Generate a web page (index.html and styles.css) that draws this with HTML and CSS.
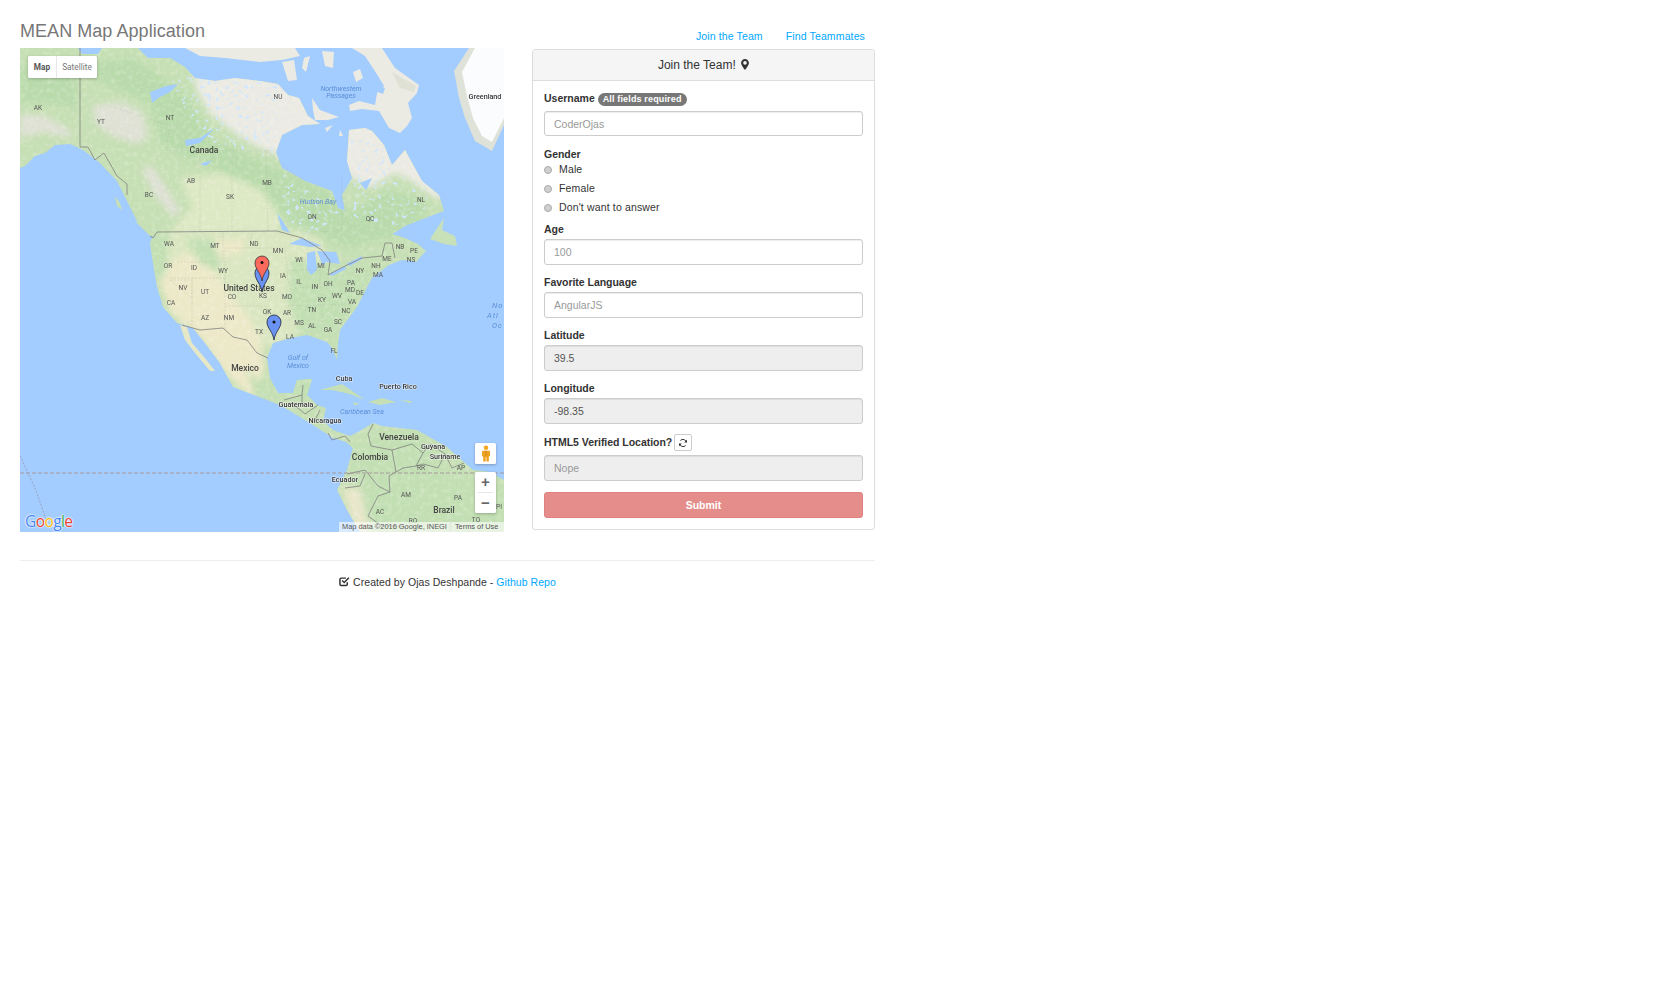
FILE: index.html
```html
<!DOCTYPE html>
<html>
<head>
  <meta charset="UTF-8">
  <title>MEAN Map Application</title>
  <link rel="stylesheet" href="styles.css">
</head>
<body>
  <div class="page">
    <div class="header">
      <h3 class="title">MEAN Map Application</h3>
      <div class="nav">
        <a href="#">Join the Team</a>
        <a href="#">Find Teammates</a>
      </div>
    </div>

    <div class="content">
      <div class="map">
        <svg class="map-svg" viewBox="0 0 484 484" width="484" height="484">
          <defs>
            <path id="landshape" d="M0,0 L58,0 L62,6 L78,6 L82,0 L118,0 L128,10 L150,10 L165,19 L175,30 L195,33 L215,30 L240,33 L258,36 L268,47 L279,50 L288,68 L300,76 L282,77 L262,87 L256,104 L262,120 L285,133 L312,143 L318,160 L325,163 L322,147 L332,130 L327,113 L329,82 L345,80 L352,83 L364,97 L372,117 L385,102 L402,133 L419,147 L424,163 L400,172 L385,178 L372,186 L385,190 L398,196 L406,203 L392,213 L382,212 L369,217 L352,230 L347,239 L337,259 L320,282 L318,295 L317,312 L312,300 L307,294 L287,287 L270,290 L253,295 L247,310 L250,330 L258,345 L273,345 L277,332 L292,331 L287,347 L297,357 L306,360 L303,373 L313,382 L330,388 L338,384 L353,375 L362,378 L397,382 L427,399 L453,422 L470,424 L484,432 L484,484 L340,484 L327,462 L317,442 L327,422 L333,400 L326,394 L313,390 L290,375 L260,357 L213,339 L200,315 L188,299 L173,280 L157,275 L143,259 L137,239 L133,215 L130,195 L133,188 L117,173 L107,153 L97,133 L80,115 L63,102 L50,96 L35,97 L25,105 L15,108 L5,118 L0,120 Z"/>
            <clipPath id="landclip">
              <use href="#landshape"/>
            </clipPath>
            <clipPath id="shieldclip">
              <path d="M150,28 L262,36 L256,110 L232,105 L190,95 L165,60 Z"/>
              <path d="M330,85 L362,100 L372,125 L400,135 L415,160 L370,180 L330,170 L335,130 Z"/>
              <path d="M262,125 L320,165 L290,190 L262,170 Z"/>
            </clipPath>
            <filter id="soft" x="-10%" y="-10%" width="120%" height="120%">
              <feGaussianBlur stdDeviation="3"/>
            </filter>
            <filter id="mottle" x="0" y="0" width="100%" height="100%">
              <feTurbulence type="fractalNoise" baseFrequency="0.22" numOctaves="3" seed="7"/>
              <feColorMatrix type="matrix" values="0 0 0 0 1  0 0 0 0 1  0 0 0 0 .94  0 0 0 2.2 -1"/>
            </filter>
            <filter id="lakes" x="0" y="0" width="100%" height="100%">
              <feTurbulence type="fractalNoise" baseFrequency="0.24" numOctaves="2" seed="21"/>
              <feColorMatrix type="matrix" values="0 0 0 0 .64  0 0 0 0 .8  0 0 0 0 1  0 0 0 9 -5.6"/>
            </filter>
          </defs>

          <rect class="ocean" width="484" height="484"/>

          <g clip-path="url(#landclip)">
            <rect class="land-base" width="484" height="484"/>
            <g filter="url(#soft)">
              <path class="tundra" d="M165,-5 L490,-5 L490,150 L415,150 L395,135 L375,125 L350,140 L325,125 L300,125 L265,110 L240,100 L215,85 L190,65 L178,45 Z"/>
              <path class="rock" d="M72,58 L100,54 L122,64 L128,88 L118,96 L92,88 L76,76 Z"/>
              <path class="rock" d="M0,66 L25,68 L52,84 L50,90 L25,84 L0,90 Z"/>
              <path class="rock" d="M122,120 L132,118 L160,162 L154,170 L134,146 Z"/>
              <path class="prairie" d="M160,130 L205,125 L245,145 L262,172 L258,183 L150,183 L172,160 Z"/>
              <path class="plains" d="M135,184 L300,184 L310,225 L275,290 L250,300 L220,290 L160,280 Z"/>
              <path class="desert" d="M137,225 L165,205 L190,215 L205,240 L225,265 L240,290 L245,320 L232,350 L205,325 L172,280 L150,265 Z"/>
              <path class="desert" d="M195,192 L225,192 L222,205 L198,208 Z"/>
              <path class="forest" d="M165,190 L195,192 L200,225 L180,215 Z"/>
              <path class="forest" d="M270,210 L355,225 L335,262 L315,285 L280,285 L268,255 Z"/>
              <path class="forest" d="M132,185 L150,185 L146,225 L137,235 Z"/>
              <path class="forest" d="M250,330 L295,330 L300,360 L270,350 Z"/>
              <path class="forest" d="M225,320 L250,345 L280,358 L260,350 L235,345 Z"/>
              <path class="forest" d="M330,395 L484,440 L484,484 L345,484 L335,440 Z"/>
              <path class="forest" d="M350,385 L400,385 L430,405 L400,425 L350,425 Z"/>
              <path class="tan" d="M322,440 L340,440 L350,484 L335,484 Z"/>
              <path class="boreal" d="M170,80 L235,110 L262,122 L312,145 L330,165 L365,142 L400,150 L410,165 L370,190 L330,200 L300,190 L262,170 L240,140 L190,120 Z"/>
              <path class="boreal" d="M62,20 L110,8 L165,45 L190,85 L175,115 L140,95 L130,55 L95,42 Z"/>
              <path class="boreal" d="M0,20 L55,20 L58,60 L25,55 L0,55 Z"/>
            </g>
            <rect class="mottle" width="484" height="484" filter="url(#mottle)"/>
            <g clip-path="url(#shieldclip)">
              <rect width="484" height="484" filter="url(#lakes)"/>
            </g>
          </g>

          <path class="land-base" d="M115,173 L125,176 L137,188 L130,188 Z"/>
          <path class="land-base" d="M95,148 L100,155 L102,162 L97,158 Z"/>
          <path class="desert-solid" d="M160,277 L167,279 172,295 L185,310 L195,323 L190,323 L175,305 L165,292 Z"/>

          <!-- arctic bits and lakes -->
          <path class="tundra" d="M165,0 L262,0 L275,0 L280,8 L262,12 L240,14 L205,10 L180,8 Z"/>
          <path class="tundra" d="M262,14 L274,12 L277,32 L268,33 Z"/>
          <path class="tundra" d="M284,10 L290,8 L286,24 L282,20 Z"/>
          <path class="tundra" d="M302,3 L314,4 L313,20 L305,18 Z"/>
          <path class="tundra" d="M292,50 L300,62 L319,69 L308,72 L295,72 L293,62 Z"/>
          <path class="tundra" d="M333,24 L340,21 L343,30 L336,34 Z"/>
          <path class="tundra" d="M332,0 L362,0 L375,20 L399,37 L397,45 L388,55 L392,70 L387,78 L380,85 L369,80 L359,63 L342,61 L330,63 L329,57 L339,53 L355,57 L357,45 L364,38 L358,28 L345,8 Z"/>
          <path class="rock" d="M372,24 L396,38 L394,44 L380,40 Z"/>
          <path class="water" d="M358,37 L365,40 L363,46 L358,44 Z"/>
          <path class="tundra" d="M305,80 L313,77 L307,84 Z"/>
          <path class="tundra" d="M320,82 L323,88 L319,88 Z"/>
          <path class="water" d="M130,44 L146,38 L158,36 L150,44 L138,50 L132,55 Z"/>
          <path class="water" d="M165,92 L180,90 L195,80 L180,95 L166,98 Z"/>
          <path class="water" d="M180,116 L192,112 L186,118 Z"/>
          <path class="water" d="M257,165 L262,172 L270,185 L262,182 Z"/>
          <path class="water" d="M269,196 L282,190 L302,198 L290,199 L278,197 Z"/>
          <path class="water" d="M287,205 L295,203 L297,222 L291,227 L287,222 Z"/>
          <path class="water" d="M297,203 L316,204 L320,216 L306,214 L303,218 Z"/>
          <path class="water" d="M309,226 L325,218 L326,221 L312,228 Z"/>
          <path class="water" d="M326,216 L342,208 L342,211 L330,218 Z"/>
          <path class="water" d="M298,60 L305,56 L304,62 Z"/>
          <path class="water" d="M340,135 L352,130 L346,142 Z"/>

          <!-- greenland -->
          <path class="ice-edge" d="M449,0 L434,23 L439,50 L445,70 L455,93 L472,103 L484,77 L484,0 Z"/>
          <path class="ice" d="M455,0 L442,24 L447,48 L453,70 L462,88 L472,94 L484,70 L484,0 Z"/>

          <!-- islands -->
          <path class="forest-solid" d="M410,191 L424,170 L422,182 L435,188 L437,198 L424,196 Z"/>
          <path class="forest-solid" d="M388,212 L402,202 L406,203 L396,214 Z"/>
          <path class="land-base" d="M300,342 L322,336 L335,345 L345,352 L330,346 L312,342 Z"/>
          <path class="land-base" d="M348,354 L362,350 L376,354 L360,357 Z"/>
          <path class="land-base" d="M380,352 L392,353 L390,355 Z"/>
          <path class="land-base" d="M333,354 L340,356 L334,357 Z"/>

          <!-- borders -->
          <g class="state-lines">
            <path d="M180,183 L180,102 M212,183 L212,102 M248,183 L246,102 L280,132"/>
            <path d="M146,102 L250,103 M90,58 L150,78 L146,102"/>
            <path d="M288,185 L322,182 L322,130"/>
            <path d="M157,214 L203,214 L203,184 M147,230 L205,230 L205,200 L230,200 L232,184"/>
            <path d="M232,200 L265,200 L268,232 L275,258 M205,230 L205,258 L246,258 L246,272 L270,272"/>
            <path d="M172,230 L172,278 M205,258 L205,282 M150,232 L172,232 L172,250 L150,232"/>
            <path d="M265,258 L330,256 M285,258 L290,285 M302,258 L302,284 M275,240 L335,236 M300,214 L300,240"/>
            <path d="M268,222 L300,222 M332,225 L352,222"/>
          </g>
          <g class="country-lines">
            <path d="M60,0 L60,99 L68,99 L75,112 L84,105 L97,128 L107,136 L107,147"/>
            <path d="M130,188 L133,190 L137,184 L257,183 L282,190 L302,202 L310,213 L308,227 L325,218 L342,210 L362,208 L365,195 L372,195 L375,210"/>
            <path d="M162,277 L180,282 L203,280 L213,289 L227,292 L237,305 L248,310"/>
            <path d="M264,352 L282,347 L283,337 M282,347 L282,358 M272,355 L285,366 L298,357 M295,372 L300,362"/>
            <path d="M308,385 L312,392 L325,388 L330,394"/>
            <path d="M353,376 L348,386 L351,398 L372,402 L376,424 L369,428 L370,444 L358,448 L348,468 L362,478 L384,478 L386,484"/>
            <path d="M372,402 L392,396 L403,405 L396,418 L383,420 L376,424"/>
            <path d="M403,405 L410,396 L425,406 L418,420 L403,416 L396,418"/>
            <path d="M425,406 L432,420 L444,415"/>
            <path d="M327,426 L345,422 L358,438 L370,444 M325,440 L340,438 L345,426"/>
          </g>
          <path class="equator" d="M0,425 L484,425"/>
          <path class="dateline" d="M0,408 L15,440 L25,468 L26,478"/>

          <!-- labels -->
          <g class="lbl">
            <text x="18" y="62">AK</text><text x="81" y="76">YT</text><text x="150" y="72">NT</text>
            <text x="258" y="51">NU</text><text x="171" y="135">AB</text><text x="129" y="149">BC</text>
            <text x="210" y="151">SK</text><text x="247" y="137">MB</text><text x="292" y="171">ON</text>
            <text x="350" y="173">QC</text><text x="401" y="154">NL</text><text x="149" y="198">WA</text>
            <text x="195" y="200">MT</text><text x="234" y="198">ND</text><text x="258" y="205">MN</text>
            <text x="148" y="220">OR</text><text x="174" y="222">ID</text><text x="203" y="225">WY</text>
            <text x="279" y="214">WI</text><text x="301" y="220">MI</text><text x="340" y="225">NY</text>
            <text x="356" y="220">NH</text><text x="367" y="213">ME</text><text x="358" y="229">MA</text>
            <text x="380" y="201">NB</text><text x="394" y="205">PE</text><text x="391" y="214">NS</text>
            <text x="263" y="230">IA</text><text x="279" y="236">IL</text><text x="295" y="241">IN</text>
            <text x="308" y="238">OH</text><text x="331" y="237">PA</text><text x="330" y="244">MD</text>
            <text x="340" y="247">DE</text><text x="163" y="242">NV</text><text x="185" y="246">UT</text>
            <text x="212" y="251">CO</text><text x="243" y="250">KS</text><text x="267" y="251">MO</text>
            <text x="302" y="254">KY</text><text x="317" y="250">WV</text><text x="332" y="256">VA</text>
            <text x="151" y="257">CA</text><text x="185" y="272">AZ</text><text x="209" y="272">NM</text>
            <text x="247" y="266">OK</text><text x="267" y="267">AR</text><text x="292" y="264">TN</text>
            <text x="326" y="265">NC</text><text x="279" y="277">MS</text><text x="292" y="280">AL</text>
            <text x="318" y="276">SC</text><text x="308" y="284">GA</text><text x="239" y="286">TX</text>
            <text x="270" y="291">LA</text><text x="314" y="305">FL</text><text x="401" y="422">RR</text>
            <text x="441" y="422">AP</text><text x="386" y="449">AM</text><text x="438" y="452">PA</text>
            <text x="360" y="466">AC</text><text x="393" y="475">RO</text><text x="456" y="474">TO</text>
            <text x="479" y="461">PI</text>
          </g>
          <g class="lbl-small">
            <text x="465" y="51">Greenland</text><text x="324" y="333">Cuba</text><text x="378" y="341">Puerto Rico</text>
            <text x="276" y="359">Guatemala</text><text x="305" y="375">Nicaragua</text>
            <text x="413" y="401">Guyana</text><text x="425" y="411">Suriname</text><text x="325" y="434">Ecuador</text>
          </g>
          <g class="lbl-big">
            <text x="184" y="105">Canada</text><text x="229" y="243">United States</text><text x="225" y="323">Mexico</text>
            <text x="379" y="392">Venezuela</text><text x="350" y="412">Colombia</text><text x="424" y="465">Brazil</text>
          </g>
          <g class="lbl-water">
            <text x="321" y="43">Northwestern</text><text x="321" y="50">Passages</text>
            <text x="298" y="156">Hudson Bay</text><text x="278" y="312">Gulf of</text><text x="278" y="320">Mexico</text>
            <text x="342" y="366">Caribbean Sea</text>
          </g>
          <g class="lbl-ocean">
            <text x="472" y="260">No</text><text x="467" y="270">Atl</text><text x="472" y="280">Oc</text>
          </g>

          <!-- markers -->
          <path class="pin-blue" d="M242,244 C241,236 235,232 235,225 A6.7,6.7 0 0 1 249,225 C249,232 243,236 242,244 Z"/>
          <path class="pin-red" d="M242,233 C241,225 235,221 235,215 A6.7,6.7 0 0 1 249,215 C249,221 243,225 242,233 Z"/>
          <circle class="pin-dot" cx="242" cy="214.5" r="1.5"/>
          <path class="pin-blue" d="M254,292 C253,284 247,280 247,274 A6.7,6.7 0 0 1 261,274 C261,280 255,284 254,292 Z"/>
          <circle class="pin-dot" cx="254" cy="274" r="1.5"/>
        </svg>

        <div class="map-type">
          <span class="map-type-on">Map</span>
          <span class="map-type-off">Satellite</span>
        </div>
        <div class="pegman">
          <svg viewBox="0 0 10 18" width="10" height="17">
            <circle cx="5" cy="3" r="2.4" fill="#f5a623"/>
            <path d="M1.6 6.2h6.8c.5 0 .8.4.8.9V12H8v5.6H5.4V13h-.8v4.6H2V12H.8V7.1c0-.5.3-.9.8-.9z" fill="#eda11f"/>
            <path d="M4.5 6.2h1V11h-1z" fill="#c9821a"/>
          </svg>
        </div>
        <div class="zoom-ctrl">
          <button class="zoom-btn">+</button>
          <button class="zoom-btn zoom-out">−</button>
        </div>
        <div class="google-logo"><span class="g-blue">G</span><span class="g-red">o</span><span class="g-yellow">o</span><span class="g-blue">g</span><span class="g-green">l</span><span class="g-red">e</span></div>
        <div class="map-attrib">
          <span>Map data ©2016 Google, INEGI</span>
          <span class="attrib-terms">Terms of Use</span>
        </div>
      </div>

      <div class="panel">
        <div class="panel-heading">
          Join the Team!
          <svg class="icon-marker" viewBox="0 0 10 14" width="8" height="11">
            <path fill-rule="evenodd" d="M5 0C2.2 0 0 2.2 0 5c0 2.8 5 9 5 9s5-6.2 5-9c0-2.8-2.2-5-5-5zm0 7.3a2.3 2.3 0 1 1 0-4.6 2.3 2.3 0 0 1 0 4.6z"/>
          </svg>
        </div>
        <form class="panel-body">
          <div class="group group-user">
            <label class="lbl-field">Username <span class="badge">All fields required</span></label>
            <input class="field" type="text" placeholder="CoderOjas">
          </div>
          <div class="group-gender">
            <label class="lbl-field">Gender</label>
            <label class="radio"><input type="radio" name="gender"> Male</label>
            <label class="radio"><input type="radio" name="gender"> Female</label>
            <label class="radio"><input type="radio" name="gender"> Don't want to answer</label>
          </div>
          <div class="group">
            <label class="lbl-field">Age</label>
            <input class="field" type="text" placeholder="100">
          </div>
          <div class="group">
            <label class="lbl-field">Favorite Language</label>
            <input class="field" type="text" placeholder="AngularJS">
          </div>
          <div class="group">
            <label class="lbl-field">Latitude</label>
            <input class="field" type="text" value="39.5" disabled>
          </div>
          <div class="group">
            <label class="lbl-field">Longitude</label>
            <input class="field" type="text" value="-98.35" disabled>
          </div>
          <div class="group">
            <label class="lbl-field lbl-verified">HTML5 Verified Location?
              <button type="button" class="refresh">
                <svg viewBox="0 0 12 12" width="10" height="10">
                  <path class="refresh-arc" d="M10 5A4.2 4.2 0 0 0 2.8 3M2 7A4.2 4.2 0 0 0 9.2 9"/>
                  <path d="M10.8 2V5.4H7.4z M1.2 10V6.6H4.6z" fill="#333"/>
                </svg>
              </button>
            </label>
            <input class="field" type="text" placeholder="Nope" disabled>
          </div>
          <button type="button" class="submit">Submit</button>
        </form>
      </div>
    </div>

    <hr class="divider">

    <div class="footer">
      <svg viewBox="0 0 14 13" width="11" height="11">
        <path class="check-box" d="M10.5 7.5v2.6c0 1-.8 1.6-1.6 1.6H2.8c-.9 0-1.6-.7-1.6-1.6V3.8c0-.9.7-1.6 1.6-1.6h6"/>
        <path class="check-box" d="M4 5.2l2.6 2.6L12.6 1.8"/>
      </svg>
      Created by Ojas Deshpande - <a href="#">Github Repo</a>
    </div>
  </div>
</body>
</html>
```
FILE: styles.css
```css
body
{
  margin: 0;
  background: #fff;
  color: #333;
  font-family: "Liberation Sans", Arial, sans-serif;
  font-size: 10.5px;
  line-height: 15px;
}
a
{
  color: #00a8ff;
  text-decoration: none;
}
.page
{
  width: 855px;
  margin-left: 20px;
  padding-top: 20px;
}
.header
{
  display: flex;
  justify-content: space-between;
  align-items: flex-end;
  height: 28px;
}
.title
{
  margin: 0 0 7px 0;
  font-size: 18px;
  line-height: 20px;
  font-weight: normal;
  color: #777;
  letter-spacing: 0.05px;
}
.nav
{
  display: flex;
  gap: 23px;
  padding-right: 10px;
  padding-bottom: 4px;
  letter-spacing: 0.13px;
}
.content
{
  display: flex;
  align-items: flex-start;
  gap: 28px;
}

/* map */
.map
{
  position: relative;
  flex: 0 0 484px;
  width: 484px;
  height: 484px;
  overflow: hidden;
  font-family: Roboto, "Liberation Sans", sans-serif;
}
.map-svg
{
  display: block;
  filter: blur(0.4px);
}
.ocean, .water { fill: #a3ccff; }
.land-base { fill: #c6dfb4; }
.tundra { fill: #ebeae3; }
.rock { fill: #dfe1d5; }
.prairie { fill: #dde8c4; }
.plains { fill: #dae6c1; }
.desert { fill: #ece8c8; }
.desert-solid { fill: #e6e7c6; }
.forest { fill: #c2dfb3; }
.forest-solid { fill: #c8e1b9; }
.boreal { fill: #b9dbac; }
.tan { fill: #e8e6ca; }
.ice { fill: #fbfcfd; }
.ice-edge { fill: #dfe2d8; }
.mottle { opacity: 0.28; }
.state-lines path
{
  fill: none;
  stroke: #a8a89a;
  stroke-width: 0.5;
  stroke-dasharray: 2 1.5;
  opacity: 0.5;
}
.country-lines path
{
  fill: none;
  stroke: #808080;
  stroke-width: 0.8;
}
.equator
{
  stroke: #a79a9a;
  stroke-width: 1;
  stroke-dasharray: 4 2;
  fill: none;
}
.dateline
{
  stroke: #9b8fa8;
  stroke-width: 0.7;
  stroke-dasharray: 2 1.5;
  fill: none;
}
.lbl text, .lbl-small text, .lbl-big text, .lbl-water text
{
  text-anchor: middle;
}
.lbl
{
  font-size: 6.5px;
  fill: #555;
}
.lbl-small
{
  font-size: 7.2px;
  font-weight: 500;
  fill: #333;
  stroke: rgba(255, 255, 255, 0.7);
  stroke-width: 1px;
  paint-order: stroke;
}
.lbl-big
{
  font-size: 8.5px;
  font-weight: 500;
  fill: #444;
}
.lbl-water
{
  font-size: 7px;
  font-style: italic;
  fill: #5c8fd6;
}
.lbl-ocean
{
  font-size: 7.5px;
  font-style: italic;
  letter-spacing: 1px;
  fill: #5c8fd6;
}
.pin-red
{
  fill: #fb6a5c;
  stroke: #333;
  stroke-width: 0.8;
}
.pin-blue
{
  fill: #6b93f4;
  stroke: #1c2233;
  stroke-width: 0.8;
}
.pin-dot { fill: #111; }

.map-type
{
  position: absolute;
  left: 8px;
  top: 8px;
  display: flex;
  height: 22px;
  background: #fff;
  border-radius: 1.5px;
  box-shadow: 0 1px 3px rgba(0, 0, 0, 0.25);
  font-size: 8.25px;
  line-height: 22px;
}
.map-type-on
{
  width: 28px;
  text-align: center;
  font-weight: bold;
  color: #555;
  border-right: 1px solid #e8e8e8;
}
.map-type-off
{
  width: 40px;
  text-align: center;
  color: #777;
}
.pegman
{
  position: absolute;
  left: 455px;
  top: 395px;
  display: flex;
  justify-content: center;
  align-items: center;
  width: 21px;
  height: 21px;
  background: #fff;
  border-radius: 1.5px;
  box-shadow: 0 1px 3px rgba(0, 0, 0, 0.25);
}
.zoom-ctrl
{
  position: absolute;
  left: 455px;
  top: 424px;
  display: flex;
  flex-direction: column;
  width: 21px;
  height: 41px;
  background: #fff;
  border-radius: 1.5px;
  box-shadow: 0 1px 3px rgba(0, 0, 0, 0.25);
}
.zoom-btn
{
  flex: 1;
  padding: 0;
  border: none;
  background: none;
  color: #666;
  font: bold 15px/20px "Liberation Sans", sans-serif;
}
.zoom-out
{
  margin: 0 3px;
  border-top: 1px solid #e6e6e6;
}
.google-logo
{
  position: absolute;
  left: 5px;
  bottom: 2px;
  font: 15.5px/18px "Open Sans", sans-serif;
  letter-spacing: -0.6px;
  text-shadow: 0 0 1px #fff, 0 0 2px #fff, 0 0 2px #fff;
}
.g-blue { color: #4285f4; }
.g-red { color: #ea4335; }
.g-yellow { color: #fbbc05; }
.g-green { color: #34a853; }
.map-attrib
{
  position: absolute;
  right: 0;
  bottom: 0;
  display: flex;
  align-items: center;
  width: 165px;
  height: 10px;
  padding-left: 3px;
  box-sizing: border-box;
  background: rgba(255, 255, 255, 0.6);
  color: #555;
  font: 7.4px/10px "Liberation Sans", sans-serif;
  white-space: nowrap;
}
.attrib-terms
{
  margin-left: 3px;
  padding-left: 4px;
  border-left: 1px solid #e4e4e4;
}

/* form panel */
.panel
{
  flex: 0 0 343px;
  box-sizing: border-box;
  width: 343px;
  height: 481px;
  margin-top: 1px;
  border: 1px solid #ddd;
  border-radius: 3px;
}
.panel-heading
{
  box-sizing: border-box;
  height: 31px;
  background: #f5f5f5;
  border-bottom: 1px solid #ddd;
  text-align: center;
  font-size: 12px;
  line-height: 30px;
  border-radius: 2px 2px 0 0;
}
.icon-marker
{
  margin-left: 2px;
  vertical-align: -1px;
  fill: #333;
}
.panel-body
{
  padding: 10px 11px;
}
.group
{
  margin-bottom: 10.5px;
}
.lbl-field
{
  display: block;
  margin-bottom: 2px;
  font-weight: bold;
  color: #333;
  letter-spacing: -0.03px;
}
.group-user
{
  margin-bottom: 10.75px;
}
.group-user .lbl-field
{
  margin-bottom: 4.75px;
  letter-spacing: 0;
}
.badge
{
  display: inline-block;
  padding: 0 5px;
  background: #777;
  border-radius: 7px;
  color: #fff;
  font-size: 9px;
  line-height: 13px;
  letter-spacing: 0.15px;
  vertical-align: 0;
}
.field
{
  display: block;
  box-sizing: border-box;
  width: 319px;
  height: 25.5px;
  padding: 0 9px;
  border: 1px solid #ccc;
  border-radius: 3px;
  box-shadow: inset 0 1px 1px rgba(0, 0, 0, 0.075);
  background: #fff;
  color: #555;
  font: 10.5px "Liberation Sans", sans-serif;
}
.field::placeholder
{
  color: #999;
  opacity: 1;
}
.field:disabled
{
  background: #eee;
  opacity: 1;
}
.group-gender
{
  margin-bottom: 5px;
}
.group-gender > .lbl-field
{
  margin: 0 0 -2px 0;
}
.radio
{
  display: flex;
  align-items: center;
  gap: 7px;
  height: 19px;
  color: #333;
  letter-spacing: 0.15px;
}
.radio input
{
  appearance: none;
  box-sizing: border-box;
  width: 8px;
  height: 8px;
  margin: 1px 0 0 0;
  border: 1px solid #aaa;
  border-radius: 50%;
  background: #cfcfcf;
}
.lbl-verified
{
  display: flex;
  align-items: center;
  gap: 2px;
  height: 17px;
  margin-bottom: 4px;
}
.refresh
{
  display: flex;
  justify-content: center;
  align-items: center;
  box-sizing: border-box;
  width: 18px;
  height: 17px;
  padding: 0;
  background: #fff;
  border: 1px solid #ccc;
  border-radius: 2px;
}
.refresh-arc
{
  fill: none;
  stroke: #333;
  stroke-width: 1.2;
}
.submit
{
  display: block;
  box-sizing: border-box;
  width: 319px;
  height: 26px;
  margin-top: 11.5px;
  padding: 0;
  background: #e58d8b;
  border: 1px solid #df8280;
  border-radius: 3px;
  color: #fff;
  font: bold 10.5px "Liberation Sans", sans-serif;
}

.divider
{
  height: 1px;
  margin: 28px 0 0 0;
  border: none;
  background: #eee;
}
.footer
{
  margin-top: 14px;
  text-align: center;
  color: #333;
  letter-spacing: 0.05px;
}
.footer svg
{
  vertical-align: -1px;
}
.check-box
{
  fill: none;
  stroke: #333;
  stroke-width: 1.9;
}
```
